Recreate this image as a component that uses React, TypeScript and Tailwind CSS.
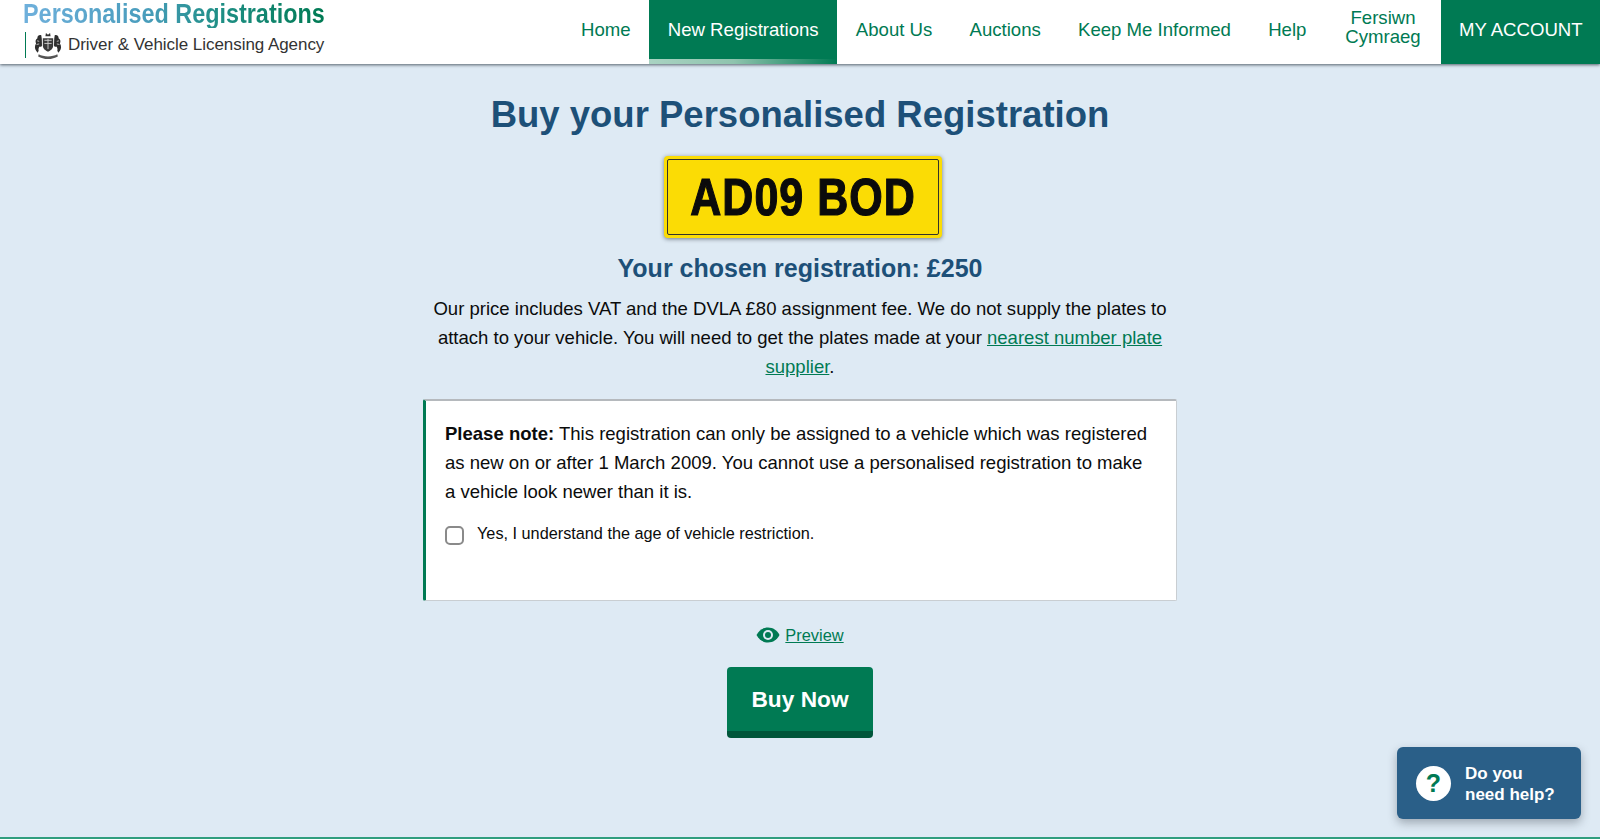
const sans = "font-['Liberation_Sans',Arial,sans-serif]";

const navItems = [
  { label: "Home" },
  { label: "New Registrations", active: true },
  { label: "About Us" },
  { label: "Auctions" },
  { label: "Keep Me Informed" },
  { label: "Help" },
];

function Crest() {
  return (
    <svg width="32" height="29" viewBox="0 0 30 28" fill="none">
      {/* crown */}
      <path d="M12.500 5l.5-3 2 1.500 2-1.500.5 3z" fill="#333" />
      {/* shield */}
      <path d="M10 7h10v7c0 3-2.500 5-5 6-2.500-1-5-3-5-6z" fill="#3a3a3a" />
      <path d="M11.500 9h7M11.500 12h7M15 7.500v10" stroke="#cfcfcf" strokeWidth="0.9" />
      {/* lion */}
      <path d="M8.500 4C6 3.500 4.500 5 4.800 7 3 8 2.500 10 3.500 12 2 14 2 17 3.500 19l1.500 2 1-2c-.5-1.500 0-3 1-4 1 .5 2 0 2.200-1L9 7.500z" fill="#2e2e2e" />
      <path d="M4.500 9.500l2 .5M4 13l2.500-.5" stroke="#d5d5d5" strokeWidth="0.8" />
      {/* unicorn */}
      <path d="M21.500 4c2.500-.5 4 1 3.700 3 1.800 1 2.300 3 1.300 5 1.500 2 1.500 5 0 7l-1.500 2-1-2c.5-1.500 0-3-1-4-1 .5-2 0-2.200-1l.2-6.500z" fill="#2e2e2e" />
      <path d="M25.500 9.500l-2 .5M26 13l-2.500-.5" stroke="#d5d5d5" strokeWidth="0.8" />
      {/* motto */}
      <path d="M6 22.500c2.500 1.500 5.500 2 9 2s6.500-.5 9-2l.5 2c-2.500 1.500-6 2.500-9.500 2.500s-7-1-9.500-2.500z" fill="#555" />
    </svg>
  );
}

function Header() {
  return (
    <header className="relative z-10 flex h-[64px] justify-between bg-white shadow-[0_1px_3px_rgba(40,50,60,0.75)]">
      <div className="shrink-0 pl-[23px]">
        <div className="h-[30px]">
          <div className="w-[360px] origin-top-left scale-x-[0.836] whitespace-nowrap bg-[linear-gradient(90deg,#6fb0dc_0%,#4a9dbd_40%,#1f8f86_65%,#007a53_100%)] bg-clip-text text-[28px] leading-[28px] font-bold text-transparent">
            Personalised Registrations
          </div>
        </div>
        <div className="flex h-[30px] items-center">
          <div className="ml-[2px] h-[26px] w-[1px] bg-[#007a53]" />
          <div className="ml-[6px] w-[32px]">
            <Crest />
          </div>
          <span className="ml-[4px] whitespace-nowrap text-[17px] tracking-[-0.05px] text-[#333]">Driver &amp; Vehicle Licensing Agency</span>
        </div>
      </div>
      <nav className="flex items-stretch text-[18.600px] leading-[20px]">
        {navItems.map((n) => (
          <a
            key={n.label}
            className={`relative flex items-center whitespace-nowrap px-[18.600px] pb-[5px] ${n.active ? "bg-[#007a53] text-white" : "text-[#007a53]"}`}
          >
            {n.label}
            {n.active && (
              <span className="absolute bottom-0 left-0 h-[5px] w-full bg-[linear-gradient(90deg,#a9d3c2_0%,#8fc4ae_45%,#007a53_100%)]" />
            )}
          </a>
        ))}
        <a className="flex w-[116px] items-center justify-center pb-[11px] text-center leading-[19px] text-[#007a53]">
          Fersiwn
          <br />
          Cymraeg
        </a>
        <a className="flex w-[159px] items-center whitespace-nowrap bg-[#007a53] pb-[5px] pl-[18px] text-white">MY ACCOUNT</a>
      </nav>
    </header>
  );
}

function Plate() {
  return (
    <div className="mt-[19px] ml-[6px] rounded-[4px] bg-[#fbdc05] p-[3px] shadow-[0_1px_4px_rgba(40,50,60,0.6)]">
      <div className="flex h-[76px] w-[272px] items-center justify-center rounded-[2px] border border-[#33322a]">
        <span className="scale-y-[1.2] whitespace-pre text-[43px] leading-none font-bold tracking-[1px] text-[#0b0b0b] [-webkit-text-stroke:1px_#0b0b0b]">
          AD09 BOD
        </span>
      </div>
    </div>
  );
}

export default function App() {
  return (
    <div className={`relative flex h-[839px] flex-col overflow-hidden border-b-2 border-[#2f9e7e] bg-[#deeaf4] text-[#0b0c0c] ${sans}`}>
      <Header />
      <main className="flex flex-col items-center">
        <h1 className="mt-[29px] text-[36.500px] leading-[44px] font-bold text-[#1d5078]">Buy your Personalised Registration</h1>
        <Plate />
        <h2 className="mt-[12px] text-[25px] leading-[36px] font-bold text-[#1d5078]">Your chosen registration: £250</h2>
        <p className="mt-[8px] w-[754px] text-center text-[18.550px] leading-[29px]">
          Our price includes VAT and the DVLA £80 assignment fee. We do not supply the plates to attach to your vehicle. You will need to get the plates made at your{" "}
          <a className="text-[#007a53] underline">nearest number plate supplier</a>.
        </p>
        <section className="mt-[18px] h-[202px] w-[754px] rounded-[2px] border border-t-2 border-l-[3px] border-[#c9ced2] border-t-[#b5b9bd] border-l-[#007a53] bg-white pt-[18px] pr-[20px] pl-[19px]">
          <p className="text-[18.550px] leading-[29px]">
            <strong>Please note:</strong> This registration can only be assigned to a vehicle which was registered as new on or after 1 March 2009. You cannot use a personalised registration to make a vehicle look newer than it is.
          </p>
          <label className="mt-[17px] flex items-start">
            <span className="mt-[3px] h-[19px] w-[19px] rounded-[5px] border-2 border-[#8a8a8a] bg-white" />
            <span className="ml-[13px] text-[16.250px] leading-[20px]">Yes, I understand the age of vehicle restriction.</span>
          </label>
        </section>
        <div className="mt-[24px] flex h-[20px] items-center text-[16.400px] text-[#007a53]">
          <svg width="24" height="16" viewBox="0 0 24 16" className="mr-[5px]">
            <path d="M0.500 8C3 3.200 7 0.500 12 0.500S21 3.200 23.500 8C21 12.800 17 15.500 12 15.500S3 12.800 0.500 8z" fill="#007a53" />
            <circle cx="12" cy="8" r="5" fill="#deeaf4" />
            <circle cx="12" cy="8" r="3" fill="#007a53" />
          </svg>
          <a className="underline">Preview</a>
        </div>
        <button className="mt-[22px] h-[71px] w-[146px] rounded-[4px] border-b-[7px] border-[#00563a] bg-[#007a53] text-[22.700px] font-bold text-white">
          Buy Now
        </button>
      </main>
      <div className="absolute top-[747px] left-[1397px] flex h-[72px] w-[184px] items-center rounded-[6px] bg-[#2a5f88] pt-[1px] pl-[19px] shadow-[0_4px_10px_rgba(40,50,60,0.35)]">
        <span className="flex h-[35px] w-[35px] items-center justify-center rounded-full bg-white text-[25px] leading-none font-bold text-[#007a53]">?</span>
        <span className="ml-[14px] text-[17px] leading-[21px] font-bold text-white">
          Do you
          <br />
          need help?
        </span>
      </div>
    </div>
  );
}
